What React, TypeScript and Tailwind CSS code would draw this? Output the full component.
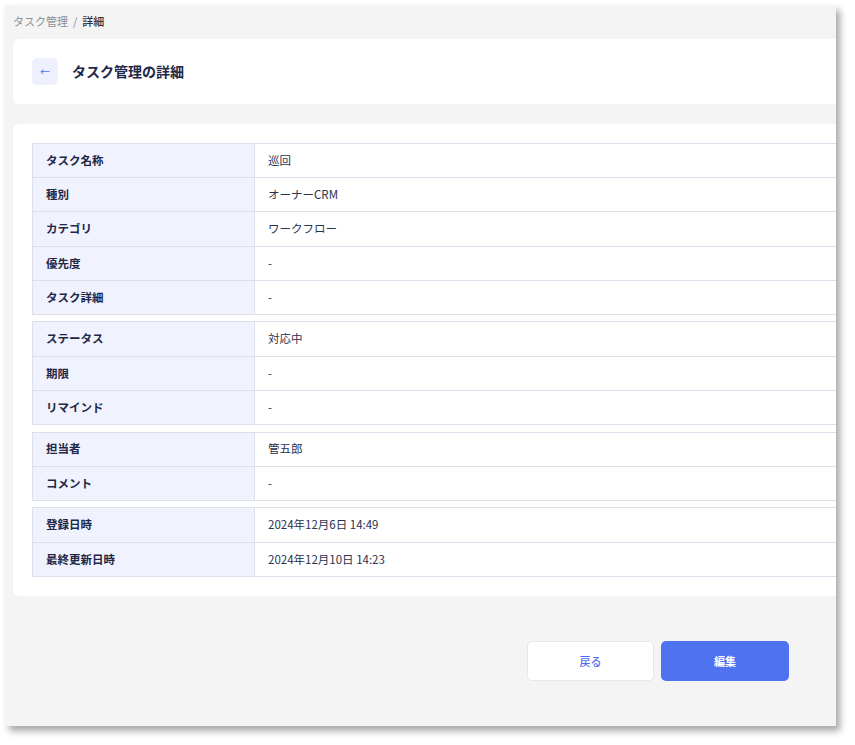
import * as React from 'react';

type Row = { label: string; value: string };

const groups: Row[][] = [
  [
    { label: 'タスク名称', value: '巡回' },
    { label: '種別', value: 'オーナーCRM' },
    { label: 'カテゴリ', value: 'ワークフロー' },
    { label: '優先度', value: '-' },
    { label: 'タスク詳細', value: '-' },
  ],
  [
    { label: 'ステータス', value: '対応中' },
    { label: '期限', value: '-' },
    { label: 'リマインド', value: '-' },
  ],
  [
    { label: '担当者', value: '管五郎' },
    { label: 'コメント', value: '-' },
  ],
  [
    { label: '登録日時', value: '2024年12月6日 14:49' },
    { label: '最終更新日時', value: '2024年12月10日 14:23' },
  ],
];

const font = { fontFamily: '"Noto Sans CJK JP", "Noto Sans", sans-serif' };

const DetailGroup: React.FC<{ rows: Row[]; first?: boolean }> = ({ rows, first }) => (
  <div className={`border-t border-l border-[#dde0ec] ${first ? '' : 'mt-[6.5px]'}`}>
    {rows.map((r) => (
      <div key={r.label} className="flex h-[34.2px] border-b border-[#dde0ec]">
        <div className="w-[222px] shrink-0 bg-[#f0f3fe] border-r border-[#dde0ec] flex items-center pl-[13px] text-[11.5px] font-bold text-[#1e2747]">
          {r.label}
        </div>
        <div className="flex-1 flex items-center pl-[13px] text-[11.5px] text-[#2a3150]">
          {r.value}
        </div>
      </div>
    ))}
  </div>
);

export default function App() {
  return (
    <div className="w-[855px] h-[745px] bg-white pt-[5px] pl-[5px]" style={font}>
      <div className="w-[831px] h-[721px] bg-[#f4f4f4] overflow-hidden shadow-[4px_5px_7px_rgba(0,0,0,0.35)]">
        <div className="w-[900px] pl-[8px]">
          <div className="h-[34px] flex items-center text-[11px] gap-[5px] pb-[2px]">
            <span className="text-[#8b8f98]">タスク管理</span>
            <span className="text-[#8b8f98]">/</span>
            <span className="text-[#2c3140] font-medium">詳細</span>
          </div>
          <div className="h-[65px] bg-white rounded-[6px] flex items-center pl-[19px] gap-[14px]">
            <button className="w-[26px] h-[27px] rounded-[5px] bg-[#eef1fd] flex items-center justify-center text-[#4f6ff0] text-[10px]">
              ←
            </button>
            <h1 className="text-[14px] font-semibold text-[#1e2747]">タスク管理の詳細</h1>
          </div>
          <div className="mt-[20px] bg-white rounded-[6px] pt-[19px] pb-[19px] pl-[19px]">
            {groups.map((g, i) => (
              <DetailGroup key={i} rows={g} first={i === 0} />
            ))}
          </div>
        </div>
        <div className="flex justify-end gap-[7px] pr-[47px] mt-[45px]">
          <button className="w-[127px] h-[40px] rounded-[5px] bg-white border border-[#e6e7ea] text-[#4f6ff0] text-[11px] font-medium">
            戻る
          </button>
          <button className="w-[128px] h-[40px] rounded-[5px] bg-[#4f73f0] text-white text-[11px] font-bold">
            編集
          </button>
        </div>
      </div>
    </div>
  );
}
